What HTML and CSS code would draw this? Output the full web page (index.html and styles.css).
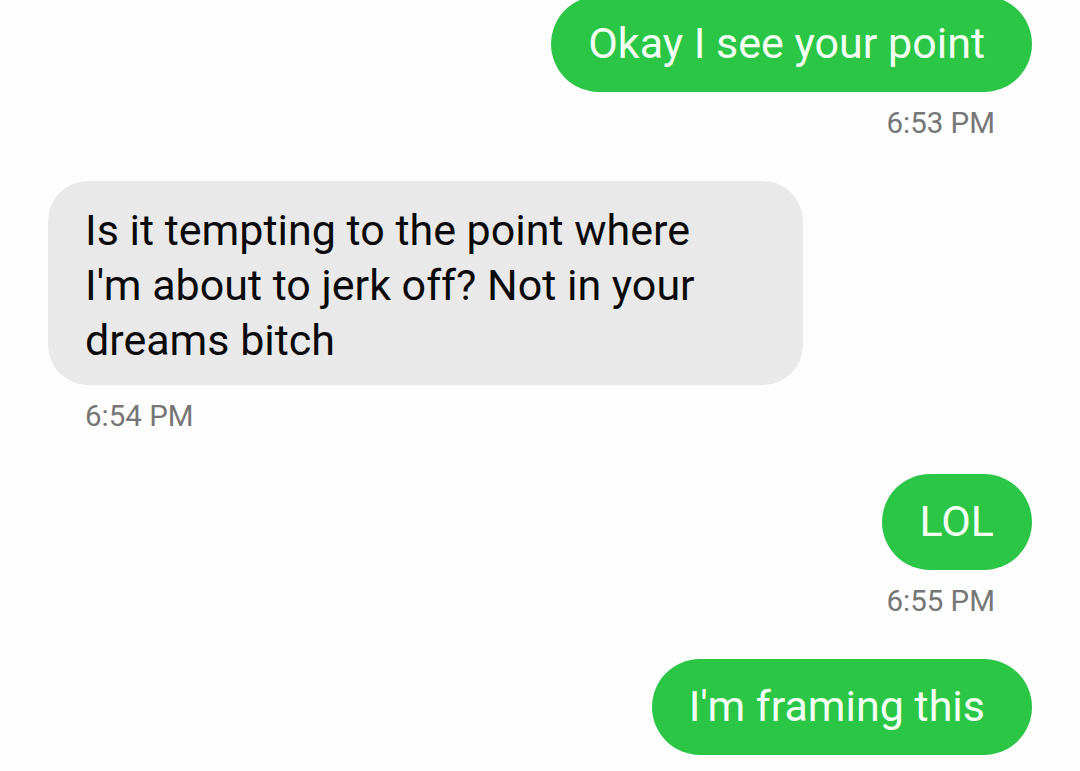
FILE: index.html
```html
<!DOCTYPE html>
<html lang="en">
<head>
<meta charset="utf-8">
<title>Messages</title>
<link rel="stylesheet" href="styles.css">
</head>
<body>
<main class="thread">
  <div class="msg out first">
    <div class="bubble">Okay I see your point</div>
    <div class="time">6:53 PM</div>
  </div>
  <div class="msg in">
    <div class="bubble">Is it tempting to the point where I'm about to jerk off? Not in your dreams bitch</div>
    <div class="time">6:54 PM</div>
  </div>
  <div class="msg out">
    <div class="bubble short">LOL</div>
    <div class="time">6:55 PM</div>
  </div>
  <div class="msg out">
    <div class="bubble">I'm framing this</div>
  </div>
</main>
</body>
</html>
```

FILE: styles.css
```css
html, body {
  margin: 0;
  padding: 0;
  background: #fdfdfd;
}

body {
  width: 1080px;
  height: 771px;
  overflow: hidden;
  font-family: Roboto, "Noto Sans", "Liberation Sans", sans-serif;
}

.thread {
  display: flex;
  flex-direction: column;
  padding: 0 48px;
}

.msg {
  display: flex;
  flex-direction: column;
}

.msg.first {
  margin-top: -4px;
}

.msg.out {
  align-items: flex-end;
}

.msg.in {
  align-items: flex-start;
}

.bubble {
  font-size: 43px;
  line-height: 55px;
  padding: 20px 47px 21px 37px;
  border-radius: 48px;
}

.out .bubble {
  background: #2cc647;
  color: #f3fff3;
  text-align: center;
}

.out .bubble.short {
  padding-left: 37px;
  padding-right: 38px;
}

.in .bubble {
  background: #e9e9e9;
  color: #0a0a0a;
  width: 628px;
  padding: 22px 90px 17px 37px;
  border-radius: 40px;
}

.time {
  font-size: 29.5px;
  line-height: 36px;
  color: #767676;
  margin: 13px 0 40px;
}

.out .time {
  margin-right: 37px;
}

.in .time {
  margin-left: 37px;
}
```
